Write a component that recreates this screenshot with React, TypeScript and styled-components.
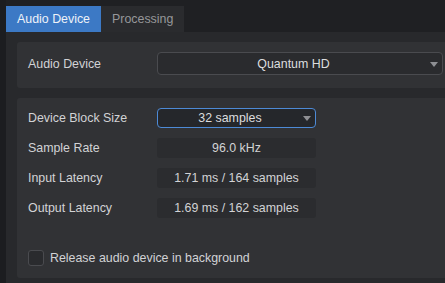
import React from "react";
import styled, { createGlobalStyle } from "styled-components";

const Global = createGlobalStyle`
  html, body { margin: 0; padding: 0; background: #1c1d20; overflow: hidden; }
  body { font-family: "Liberation Sans", Arial, sans-serif; font-size: 12.4px; }
  #root { width: 445px; height: 283px; }
`;

const Shell = styled.div`
  display: flex;
  width: 445px;
  height: 283px;
  background: #1c1d20;
`;

const Main = styled.div`
  margin-left: 6px;
  flex: 1;
  display: flex;
  flex-direction: column;
  min-width: 0;
`;

const TabBar = styled.div`
  display: flex;
  height: 32px;
  padding-top: 6px;
  box-sizing: border-box;
  background: #1f2023;
`;

const Tab = styled.div<{ $active?: boolean }>`
  display: flex;
  align-items: center;
  padding: ${(p) => (p.$active ? "0 11px 0 11px" : "0 11px")};
  background: ${(p) => (p.$active ? "#3c79c5" : "#2a2b2e")};
  color: ${(p) => (p.$active ? "#eef2f8" : "#96979a")};
  font-size: 12.4px;
`;

const Panel = styled.div`
  flex: 1;
  background: #28292c;
  padding: 10px 0 0 11px;
  display: flex;
  flex-direction: column;
  gap: 10px;
  overflow: hidden;
`;

const Card = styled.div<{ $pad: string }>`
  background: #313235;
  padding: ${(p) => p.$pad};
  border-radius: 3px 0 0 3px;
  display: flex;
  flex-direction: column;
`;

const Row = styled.div<{ $h: number }>`
  display: flex;
  align-items: center;
  height: ${(p) => p.$h}px;
`;

const Rows = styled.div`
  display: flex;
  flex-direction: column;
  gap: 10px;
`;

const Label = styled.div`
  width: 129px;
  color: #d2d3d5;
  font-size: 12.4px;
`;

const SelectBox = styled.div<{ $w: number; $focus?: boolean }>`
  position: relative;
  width: ${(p) => p.$w}px;
  height: 100%;
  box-sizing: border-box;
  padding-right: 13px;
  border: 1px solid ${(p) => (p.$focus ? "#4d8ad6" : "#4a4b4f")};
  border-radius: 4px;
  background: ${(p) => (p.$focus ? "#25272b" : "#2a2b2e")};
  color: #dcdddf;
  display: flex;
  align-items: center;
  justify-content: center;
  font-size: 12.4px;
`;

const Arrow = styled.span`
  position: absolute;
  right: 4px;
  top: 50%;
  margin-top: -2px;
  width: 0;
  height: 0;
  border-left: 4px solid transparent;
  border-right: 4px solid transparent;
  border-top: 5px solid #8e8f93;
`;

const ValueBox = styled.div`
  width: 159px;
  height: 100%;
  border-radius: 3px;
  background: #2b2c2f;
  color: #d2d3d5;
  display: flex;
  align-items: center;
  justify-content: center;
  font-size: 12.4px;
`;

const CheckRow = styled.label`
  display: flex;
  align-items: center;
  gap: 6px;
  margin-top: 32px;
  color: #d2d3d5;
  font-size: 12.4px;
`;

const Check = styled.span`
  width: 16px;
  height: 16px;
  box-sizing: border-box;
  border: 1px solid #4a4b4f;
  border-radius: 3px;
  background: #2a2b2e;
`;

export default function App() {
  return (
    <>
      <Global />
      <Shell>
        <Main>
          <TabBar>
            <Tab $active>Audio Device</Tab>
            <Tab>Processing</Tab>
          </TabBar>
          <Panel>
            <Card $pad="10px 0 13px 11px">
              <Row $h={23}>
                <Label>Audio Device</Label>
                <SelectBox $w={286}>
                  Quantum HD
                  <Arrow />
                </SelectBox>
              </Row>
            </Card>
            <Card $pad="10px 0 12px 11px">
              <Rows>
                <Row $h={20}>
                  <Label>Device Block Size</Label>
                  <SelectBox $w={159} $focus>
                    32 samples
                    <Arrow />
                  </SelectBox>
                </Row>
                <Row $h={20}>
                  <Label>Sample Rate</Label>
                  <ValueBox>96.0 kHz</ValueBox>
                </Row>
                <Row $h={20}>
                  <Label>Input Latency</Label>
                  <ValueBox>1.71 ms / 164 samples</ValueBox>
                </Row>
                <Row $h={20}>
                  <Label>Output Latency</Label>
                  <ValueBox>1.69 ms / 162 samples</ValueBox>
                </Row>
              </Rows>
              <CheckRow>
                <Check />
                Release audio device in background
              </CheckRow>
            </Card>
          </Panel>
        </Main>
      </Shell>
    </>
  );
}
